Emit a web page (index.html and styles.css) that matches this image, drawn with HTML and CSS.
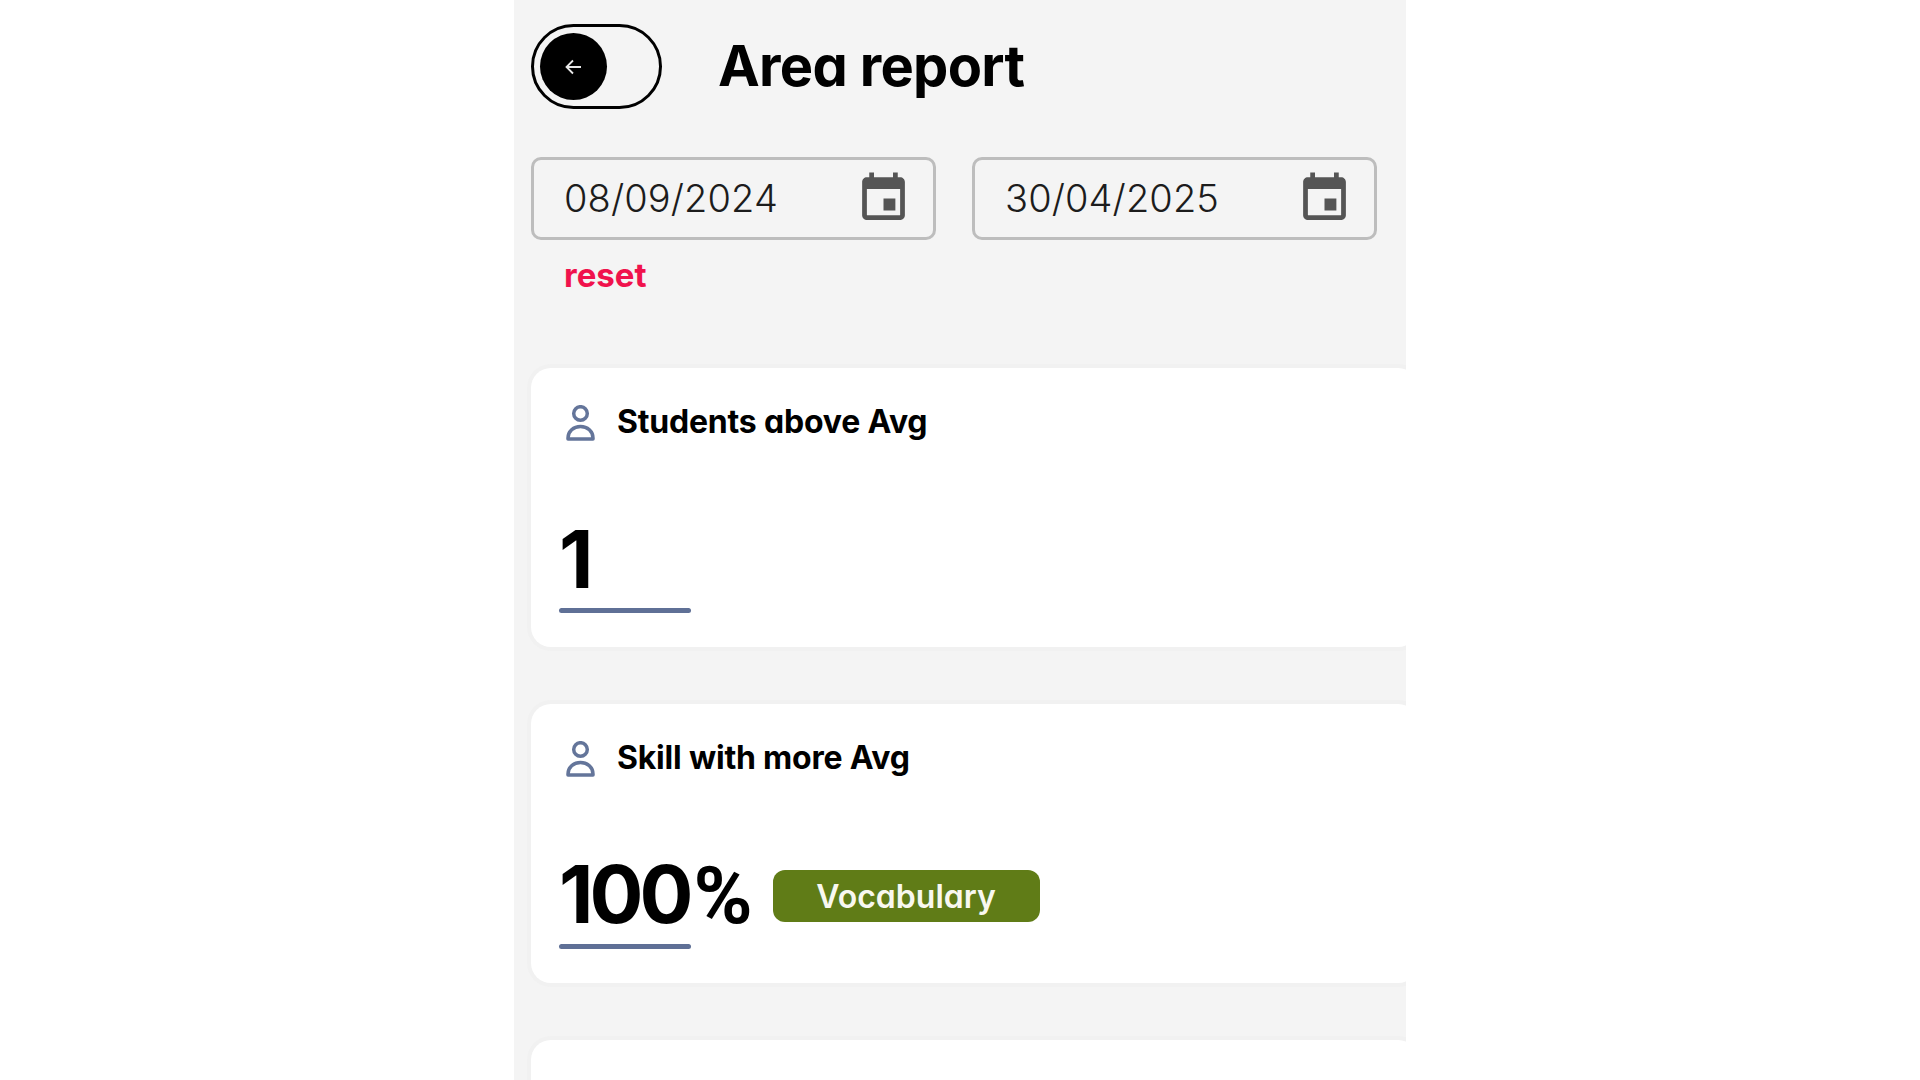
FILE: index.html
```html
<!DOCTYPE html>
<html lang="en">
<head>
    <meta charset="UTF-8">
    <meta name="viewport" content="width=device-width, initial-scale=1.0">
    <title>Area report</title>
    <link rel="stylesheet" href="styles.css">
</head>
<body>
    <div class="panel">
        <header class="top-bar">
            <button class="back-toggle" title="Back">
                <span class="back-knob">
                    <svg width="20" height="18" viewBox="0 0 20 18" fill="none" stroke="#e8e8e8" stroke-width="1.8">
                        <path d="M17 9H3M9 2.5 2.5 9 9 15.5"/>
                    </svg>
                </span>
            </button>
            <h1 class="page-title">Area report</h1>
        </header>

        <div class="date-row">
            <div class="date-field">
                <span class="date-value">08/09/2024</span>
                <svg class="date-icon" viewBox="0 0 24 24" fill="#555"><path d="M17 12h-5v5h5v-5zM16 1v2H8V1H6v2H5c-1.11 0-1.99.9-1.99 2L3 19c0 1.1.89 2 2 2h14c1.1 0 2-.9 2-2V5c0-1.1-.9-2-2-2h-1V1h-2zm3 18H5V8h14v11z"/></svg>
            </div>
            <div class="date-field">
                <span class="date-value">30/04/2025</span>
                <svg class="date-icon" viewBox="0 0 24 24" fill="#555"><path d="M17 12h-5v5h5v-5zM16 1v2H8V1H6v2H5c-1.11 0-1.99.9-1.99 2L3 19c0 1.1.89 2 2 2h14c1.1 0 2-.9 2-2V5c0-1.1-.9-2-2-2h-1V1h-2zm3 18H5V8h14v11z"/></svg>
            </div>
        </div>
        <a class="reset-link">reset</a>

        <section class="stat-card">
            <div class="stat-head">
                <svg class="stat-icon" viewBox="0 0 29 36" fill="none" stroke="#64759a" stroke-width="3.5" stroke-linejoin="round">
                    <circle cx="14.5" cy="8.5" r="6.8"/>
                    <path d="M2 34v-1C2 26.500 7.500 21.500 14.500 21.500S27 26.500 27 33v1z"/>
                </svg>
                <h2 class="stat-title">Students above Avg</h2>
            </div>
            <div class="stat-body">
                <span class="stat-number">1</span>
            </div>
            <div class="stat-line"></div>
        </section>

        <section class="stat-card">
            <div class="stat-head">
                <svg class="stat-icon" viewBox="0 0 29 36" fill="none" stroke="#64759a" stroke-width="3.5" stroke-linejoin="round">
                    <circle cx="14.5" cy="8.5" r="6.8"/>
                    <path d="M2 34v-1C2 26.500 7.500 21.500 14.500 21.500S27 26.500 27 33v1z"/>
                </svg>
                <h2 class="stat-title">Skill with more Avg</h2>
            </div>
            <div class="stat-body">
                <span class="stat-number">100<span class="stat-unit">%</span></span>
                <span class="skill-badge">Vocabulary</span>
            </div>
            <div class="stat-line"></div>
        </section>

        <section class="stat-card"></section>
    </div>
</body>
</html>
```

FILE: styles.css
```css
html, body {
    height: 100%;
}

body {
    margin: 0;
    background-color: #fff;
    font-family: Inter, "Liberation Sans", sans-serif;
    font-feature-settings: "cv11";
    color: #000;
    overflow: hidden;
}

.panel {
    width: 892px;
    height: 1080px;
    margin-left: 514px;
    padding: 24px 0 0 17px;
    box-sizing: border-box;
    background-color: #f4f4f4;
    overflow: hidden;
}

/* Header */
.top-bar {
    display: flex;
    align-items: center;
    gap: 56px;
}

.back-toggle {
    width: 131px;
    height: 85px;
    padding: 0 0 0 6px;
    box-sizing: border-box;
    display: flex;
    align-items: center;
    background: none;
    border: 3px solid #000;
    border-radius: 43px;
}

.back-knob {
    width: 67px;
    height: 67px;
    display: flex;
    align-items: center;
    justify-content: center;
    background-color: #000;
    border-radius: 50%;
}

.page-title {
    margin: 0;
    font-size: 56px;
    font-weight: 700;
    letter-spacing: -0.7px;
    line-height: 85px;
}

/* Date fields */
.date-row {
    display: flex;
    gap: 36px;
    margin-top: 48px;
}

.date-field {
    width: 405px;
    height: 83px;
    padding: 0 21px 0 30px;
    box-sizing: border-box;
    display: flex;
    align-items: center;
    justify-content: space-between;
    border: 3px solid #bdbdbd;
    border-radius: 10px;
}

.date-value {
    margin-bottom: 2px;
    font-size: 38px;
    font-weight: 300;
    letter-spacing: 0.1px;
    color: #1c1c1c;
}

.date-icon {
    width: 57px;
    height: 57px;
    flex-shrink: 0;
}

.reset-link {
    display: block;
    margin: 15px 0 0 33px;
    font-size: 33px;
    font-weight: 700;
    line-height: 40px;
    color: #f0124c;
}

/* Cards */
.stat-card {
    height: 279px;
    margin-top: 57px;
    margin-right: -12px;
    padding: 33px 0 0 28px;
    box-sizing: border-box;
    background-color: #fff;
    border-radius: 20px;
    box-shadow: 0 0 0 4px #f1f1f1;
}

.reset-link + .stat-card {
    margin-top: 73px;
}

.stat-head {
    display: flex;
    align-items: center;
    gap: 22px;
    padding-left: 7px;
    height: 40px;
}

.stat-icon {
    width: 29px;
    height: 36px;
    margin-top: 4px;
    flex-shrink: 0;
}

.stat-title {
    margin: 0;
    font-size: 32px;
    font-weight: 700;
    letter-spacing: -0.2px;
}

.stat-body {
    display: flex;
    align-items: center;
    gap: 20px;
    height: 80px;
    margin-top: 78px;
}

.stat-number {
    font-size: 80px;
    font-weight: 700;
    letter-spacing: -4px;
    line-height: 80px;
}

.stat-unit {
    margin-left: 4px;
    font-family: Roboto, sans-serif;
    font-size: 80px;
    letter-spacing: 0;
}

.skill-badge {
    width: 267px;
    height: 52px;
    margin-top: 2px;
    display: flex;
    align-items: center;
    justify-content: center;
    background-color: #607c17;
    border-radius: 12px;
    color: #f8f8f0;
    font-size: 32px;
    font-weight: 600;
}

.stat-line {
    width: 132px;
    height: 5px;
    margin-top: 9px;
    background-color: #5f7096;
    border-radius: 3px;
}
```
